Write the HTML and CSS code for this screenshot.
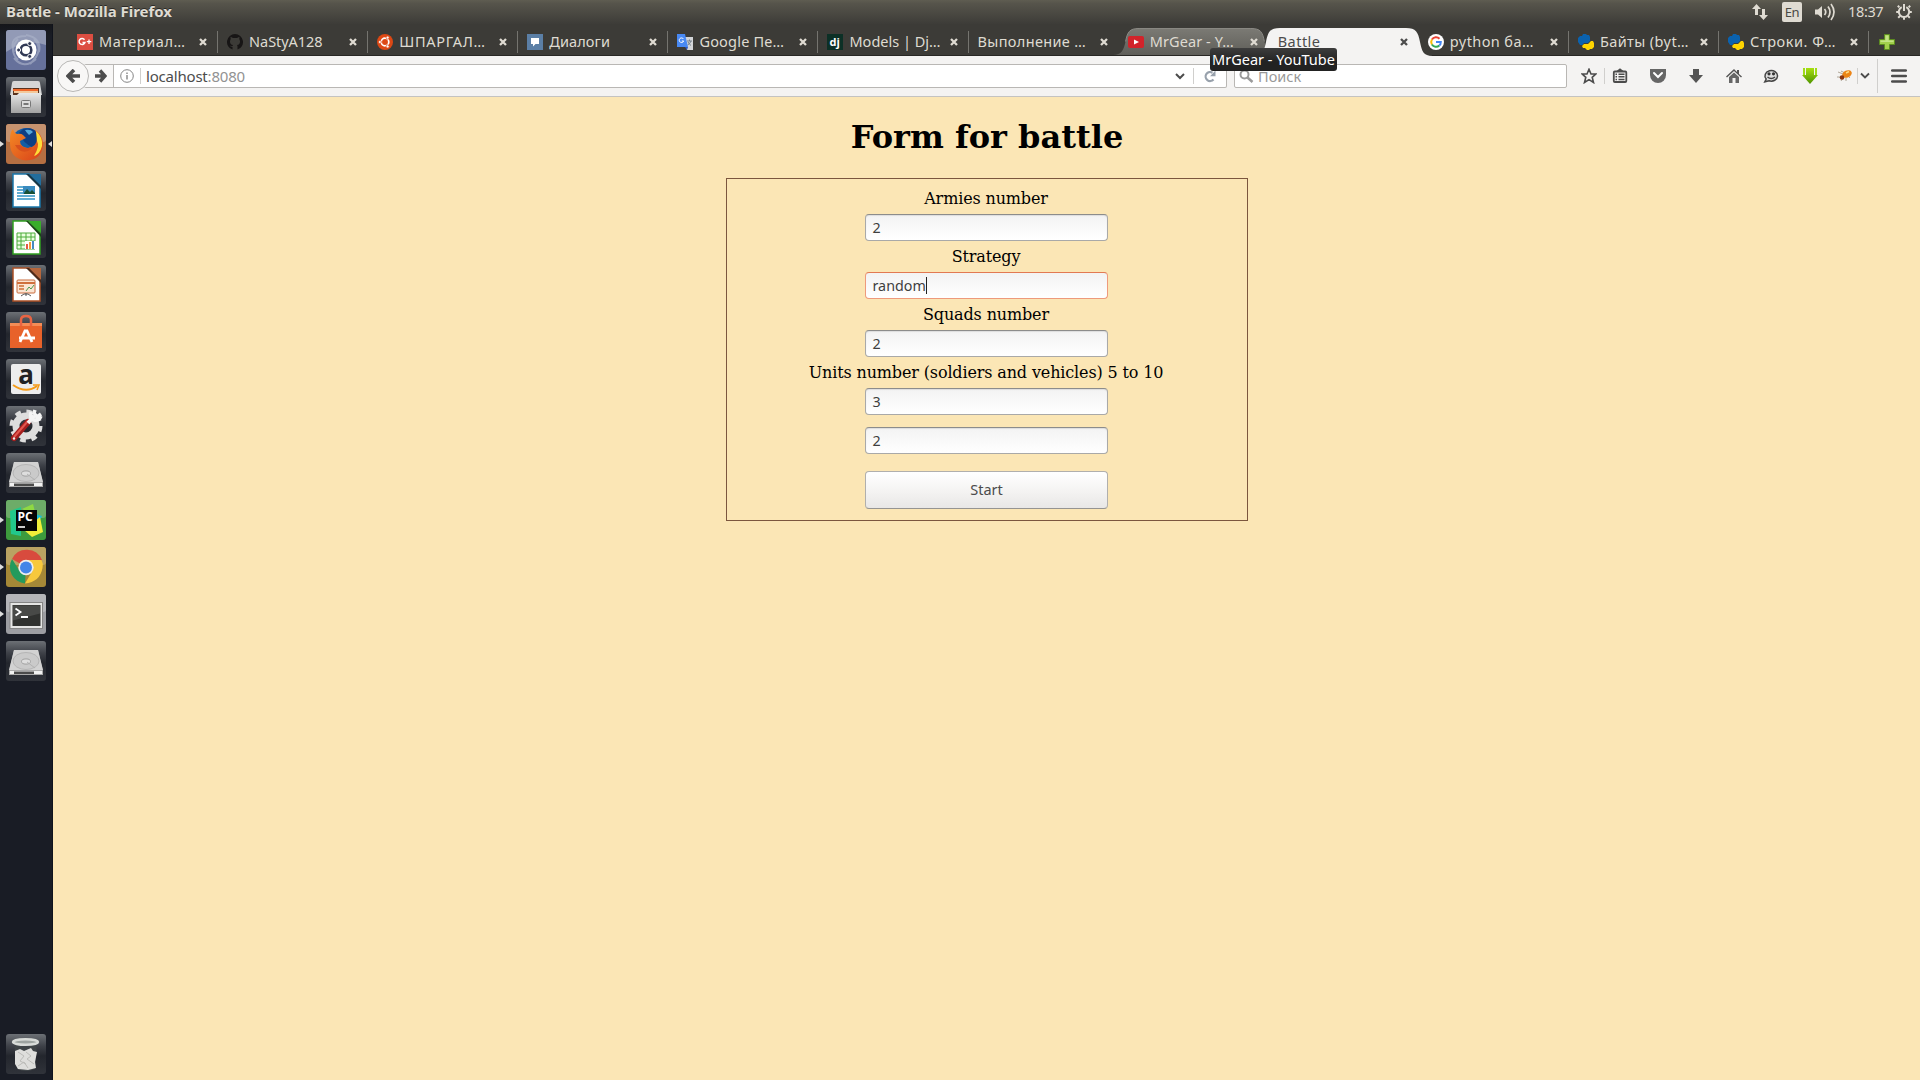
FILE: index.html
```html
<!DOCTYPE html>
<html lang="ru">
<head>
<meta charset="utf-8">
<title>Battle</title>
<link rel="stylesheet" href="styles.css">
</head>
<body>
<svg class="defs" width="0" height="0" aria-hidden="true">
  <defs>
    <linearGradient id="gTile" x1="0" y1="0" x2="0" y2="1"><stop offset="0" stop-color="#6c7075"/><stop offset=".3" stop-color="#3e4148"/><stop offset=".55" stop-color="#23262d"/><stop offset="1" stop-color="#30333a"/></linearGradient>
    <linearGradient id="gMetal" x1="0" y1="0" x2="0" y2="1"><stop offset="0" stop-color="#e8e8e8"/><stop offset="1" stop-color="#a2a2a2"/></linearGradient>
    <linearGradient id="gHover" x1="0" y1="0" x2="0" y2="1"><stop offset="0" stop-color="#7b7a74"/><stop offset="1" stop-color="#5f5e59"/></linearGradient>
    <linearGradient id="gFox" x1="0" y1="0" x2="1" y2="1"><stop offset="0" stop-color="#f48a24"/><stop offset="1" stop-color="#d8401a"/></linearGradient>
    <linearGradient id="gGreen" x1="0" y1="0" x2="0" y2="1"><stop offset="0" stop-color="#a8e010"/><stop offset="1" stop-color="#4f9400"/></linearGradient>
    <symbol id="close" viewBox="0 0 8 8"><path d="M1 1 7 7M7 1 1 7" fill="none" stroke="currentColor" stroke-width="2.300"/></symbol>
    <symbol id="python" viewBox="0 0 16 16"><path d="M2 2H4L5 0H8L9 1H11L12 3V7L10 9H6L4.500 11H2L0 8V4Z" fill="#0b62ae"/><path d="M12 15 11 16H9L7 14H5L4 12 6 10H10L13 7H15L16 9V13L14 15Z" fill="#ffd400"/></symbol>
    <symbol id="disk" viewBox="0 0 40 40"><path d="M8 9H32L37 30V34H3V30Z" fill="#a9a9a9"/><path d="M8 9H32L37 29H3Z" fill="#d2d2d2"/><path d="M4 30H36V33H4Z" fill="#f1f1f1"/><path d="M8 30.500H28V33H8Z" fill="#4b4b4b"/><ellipse cx="20" cy="20" rx="13" ry="8.500" fill="#cacaca" stroke="#b5b5b5"/><ellipse cx="20" cy="20.500" rx="4.500" ry="2.600" fill="#dedede" stroke="#a2a2a2"/><path d="M21 21 29 27" stroke="#b2b2b2"/></symbol>
  </defs>
</svg>

<header class="panel">
  <span class="panel-title">Battle - Mozilla Firefox</span>
  <div class="indicators">
    <svg class="ind-net" width="18" height="18" viewBox="0 0 18 18" fill="#dfdbd2"><path d="M5.500 1 10 6H7v6H4V6H1zM12.500 17 8 12h3V6h3v6h3z"/></svg>
    <span class="ind-lang">En</span>
    <svg class="ind-sound" width="21" height="18" viewBox="0 0 21 18"><path d="M1 6.500h3L8 3v12l-4-3.500H1z" fill="#dfdbd2"/><path d="M10.500 6q2.500 3 0 6M14 3.500q4 5.500 0 11M17 1q6 8 0 16" fill="none" stroke="#dfdbd2" stroke-width="1.700"/></svg>
    <span class="ind-clock">18:37</span>
    <svg class="ind-gear" width="18" height="18" viewBox="0 0 18 18" fill="none" stroke="#dfdbd2"><path d="M6.700 4.200a5.200 5.200 0 1 0 4.600 0" stroke-width="2"/><path d="M9 1v7" stroke-width="2"/><path d="M4.300 4.300 2.800 2.800M13.700 4.300l1.500-1.500M3.500 9H1.200M14.500 9H16.800M4.900 13.100 3.200 14.800M13.100 13.100l1.700 1.700M9 14.500V16.800" stroke-width="2"/></svg>
  </div>
</header>

<div class="desktop">
  <nav class="launcher">
    <div class="app"><svg viewBox="0 0 40 40"><rect width="40" height="40" rx="3" fill="#66719b"/><path d="M0 3Q0 0 3 0H37Q40 0 40 3V15Q20 8 0 22Z" fill="#929ab6"/><g fill="none" stroke="#abb2c9" stroke-width="2" opacity=".65"><path d="M8 22Q2 6 20 6M28 9Q39 20 24 34M12 30Q2 20 12 9M20 5Q36 8 33 22M30 29Q18 40 8 28"/></g><circle cx="20" cy="20" r="10.500" fill="#fff"/><circle cx="20" cy="20" r="5.300" fill="none" stroke="#303854" stroke-width="2.600"/><g fill="#303854" stroke="#fff"><circle cx="12.600" cy="20" r="2"/><circle cx="23.700" cy="13.600" r="2"/><circle cx="23.700" cy="26.400" r="2"/></g></svg></div>
    <div class="app"><svg viewBox="0 0 40 40"><rect width="40" height="40" rx="3" fill="url(#gTile)"/><path d="M6 6Q6 4 8 4H32Q34 4 34 6L36 18H4Z" fill="#d6d6d6"/><path d="M7 11H33V18H7Z" fill="#59331f"/><path d="M7 12H32V14H7Z" fill="#ef6a2d"/><path d="M8 14H32V16H8Z" fill="#f3c99b"/><path d="M5 18H11L13 16H35V36H5Z" fill="url(#gMetal)"/><rect x="15.500" y="23.500" width="9" height="7" rx="1" fill="#ddd" stroke="#777"/><path d="M17.500 27H22.500" stroke="#777" stroke-width="2"/></svg></div>
    <div class="app running focused"><svg viewBox="0 0 40 40"><rect width="40" height="40" rx="3" fill="#b56f42"/><rect width="40" height="18" rx="3" fill="#c5926f"/><circle cx="20.500" cy="19.500" r="15.500" fill="#135da4"/><path d="M17 5Q27 2 32 10Q34 20 26 23Q17 19 13 9Z" fill="#0e3f83"/><path d="M19 6Q25 5 27 8L23 11Q20 8 19 6Z" fill="#53a9dc"/><path d="M4 15Q4 8 7 5Q8 9 11 10Q15 9 17 11L20 14L14 17Q14 23 22 24Q31 23 31 14Q31 9 29 6Q36 10 37 19Q37 36 20 36.500Q4 35 4 19Z" fill="url(#gFox)"/><path d="M30 7Q37 13 36 22Q34 30 28 32Q34 22 31 17Z" fill="#ffdc38"/><path d="M9 21Q14 30 22 27Q27 25 25 23Q20 26 14 21Z" fill="#d8501c"/></svg></div>
    <div class="app"><svg viewBox="0 0 40 40"><rect width="40" height="40" rx="3" fill="url(#gTile)"/><path d="M7 3H23L34 15V36H7Z" fill="#fff" stroke="#1a77aa" stroke-width="1.500"/><path d="M23 3H35V15Z" fill="#226d9d"/><path d="M23 3 35 15V18L20 3Z" fill="#173747"/><path d="M11 16H17M11 19H17M11 22H17M11 25H29M11 28H29" stroke="#2e91c4" stroke-width="1.500"/><path d="M17 15H29V23H17Z" fill="#398bc0"/><path d="M18 22 21 18 24 21 26 19 29 22V23H18Z" fill="#175036"/></svg></div>
    <div class="app"><svg viewBox="0 0 40 40"><rect width="40" height="40" rx="3" fill="url(#gTile)"/><path d="M7 3H23L34 15V36H7Z" fill="#fff" stroke="#30a021" stroke-width="1.500"/><path d="M22 3H35V15Z" fill="#39ad2b"/><path d="M22 3 35 16V19L20 3Z" fill="#1b4417"/><path d="M11 15H29V31H11Z" fill="#eaffdf"/><path d="M11 15H29V31H11ZM15 15V31M20 15V31M25 15V31M11 19H29M11 23H29M11 27H29" fill="none" stroke="#4bac3b"/><path d="M19 23H30V31H19Z" fill="#fff"/><path d="M20 26H22V31H20Z" fill="#e25b44"/><path d="M23 24H25V31H23Z" fill="#f49b38"/><path d="M26 23H28V31H26Z" fill="#468bc0"/></svg></div>
    <div class="app"><svg viewBox="0 0 40 40"><rect width="40" height="40" rx="3" fill="url(#gTile)"/><path d="M7 3H23L34 15V36H7Z" fill="#fff" stroke="#ac5026" stroke-width="1.500"/><path d="M23 3H35V15Z" fill="#b5663c"/><path d="M23 3 35 15V18L20 3Z" fill="#4d2b1a"/><rect x="11" y="15" width="18" height="13" rx="1" fill="#fbe5d3" stroke="#c86b3c"/><path d="M11 18H29" stroke="#d0703d" stroke-width="2"/><path d="M13 21H18M13 24H18" stroke="#d88c5c" stroke-width="2"/><path d="M20 26 23 22 25 24 28 20" stroke="#499c4f" fill="none"/><path d="M15 31 18 29H22L25 31M20 28V31" stroke="#555" fill="none"/></svg></div>
    <div class="app"><svg viewBox="0 0 40 40"><rect width="40" height="40" rx="3" fill="url(#gTile)"/><path d="M4 11H36V36H4Z" fill="#e8622a"/><path d="M4 11H36V14H4Z" fill="#f38c56"/><path d="M15 14V8Q15 4 20 4T25 8V14" fill="none" stroke="#e86443" stroke-width="2.500"/><path d="M14 30 19 19H21L26 30M13 26H29" fill="none" stroke="#fff" stroke-width="2.800"/></svg></div>
    <div class="app"><svg viewBox="0 0 40 40"><rect width="40" height="40" rx="3" fill="url(#gTile)"/><rect x="5" y="5" width="30" height="30" rx="2" fill="#ededed"/><text x="20" y="25" text-anchor="middle" class="amazon">a</text><path d="M7 26Q20 35 31 27" fill="none" stroke="#f49b18" stroke-width="2"/><path d="M27 26H33L31 31" fill="none" stroke="#f49b18" stroke-width="1.500"/></svg></div>
    <div class="app"><svg viewBox="0 0 40 40"><rect width="40" height="40" rx="3" fill="url(#gTile)"/><circle cx="20" cy="20" r="10" fill="none" stroke="#dedede" stroke-width="7"/><circle cx="20" cy="20" r="14.500" fill="none" stroke="#dedede" stroke-width="4" stroke-dasharray="5.700 5.690"/><path d="M8 32 22 16" stroke="#a51e1e" stroke-width="6" stroke-linecap="round"/><path d="M8 31 22 15" stroke="#e2564d" stroke-width="2"/><path d="M22 17 28 10M25 6Q23 13 28 14Q33 15 35 10M29 4 28 7 31 11 35 8" fill="none" stroke="#f5f5f5" stroke-width="3.500"/><circle cx="8" cy="32.500" r="1.200" fill="#eee"/></svg></div>
    <div class="app"><svg viewBox="0 0 40 40"><rect width="40" height="40" rx="3" fill="url(#gTile)"/><use href="#disk"/></svg></div>
    <div class="app running"><svg viewBox="0 0 40 40"><rect width="40" height="40" rx="3" fill="#3d9b3d"/><rect width="40" height="18" rx="3" fill="#6dac68"/><path d="M4 11 15 7V36L5 34Z" fill="#22c88b"/><path d="M16 9 27 4 30 16Z" fill="#8fd943"/><path d="M25 13 36 16 31 26Z" fill="#18bdd7"/><path d="M18 30 34 17 37 32 26 37Z" fill="#f1ee39"/><rect x="10" y="10" width="21" height="21" fill="#050505"/><text x="11.500" y="21.300" class="pc">PC</text><path d="M12 27H19" stroke="#fff" stroke-width="1.600"/></svg></div>
    <div class="app running"><svg viewBox="0 0 40 40"><rect width="40" height="40" rx="3" fill="#a58837"/><rect width="40" height="18" rx="3" fill="#b9a262"/><path d="M20 20 6 12A16.500 16.500 0 0 1 36 13Z" fill="#d84b3e"/><path d="M20 20 19 36.500A16.500 16.500 0 0 1 6 12L13 23Z" fill="#249a5c"/><path d="M20 13H35.500Q37.500 16.500 36.500 21Q34 35 19 36.500L27 23Z" fill="#f7c83c"/><circle cx="20" cy="20.500" r="7.700" fill="#eee"/><circle cx="20" cy="20.500" r="6" fill="#4285e8"/></svg></div>
    <div class="app running"><svg viewBox="0 0 40 40"><rect width="40" height="40" rx="3" fill="#9c9da2"/><rect width="40" height="18" rx="3" fill="#b4b5b9"/><rect x="4" y="8.500" width="32.500" height="26" fill="#e5e5e4" stroke="#858585"/><rect x="6.500" y="11" width="28" height="21" fill="#30312f"/><path d="M7 11.500H34V19.500L7 26.500Z" fill="#484947"/><path d="M9.500 14.500 14.500 18 9.500 21.500M15 23H22" fill="none" stroke="#fff" stroke-width="1.800"/></svg></div>
    <div class="app"><svg viewBox="0 0 40 40"><rect width="40" height="40" rx="3" fill="url(#gTile)"/><use href="#disk"/></svg></div>
    <div class="app trash"><svg viewBox="0 0 40 40"><rect width="40" height="40" rx="3" fill="url(#gTile)"/><path d="M8 9H31L29 35Q20 39 11 35Z" fill="#3f4447"/><path d="M9 17 14 15 18 17 25 14 27 17 31 18 29 28 30 34 22 36 12 35 9 30Z" fill="#dededc"/><path d="M12 18 18 22 14 27 20 30M20 18 25 22 21 25 28 30M12 32 18 28 22 34" fill="none" stroke="#bcbcb9"/><ellipse cx="19.500" cy="8" rx="12.500" ry="2.800" fill="#9da3a0" stroke="#d8dbd8" stroke-width="2.400"/></svg></div>
  </nav>

  <div class="browser">
    <div class="tabs">
      <div class="tab"><svg class="fav" viewBox="0 0 16 16"><path d="M0 0H16V16H0Z" fill="#dc4e41"/><path d="M7.500 5.700A3 3 0 1 0 8 8.400H5.500" fill="none" stroke="#fff" stroke-width="1.500"/><path d="M12 5.500V10M9.800 7.700H14.300" stroke="#fff" stroke-width="1.300"/></svg><span class="label t1">Материал…</span><svg class="close"><use href="#close"/></svg></div>
      <div class="tab"><svg class="fav" viewBox="0 0 16 16"><path d="M8 0A8 8 0 0 0 5.500 15.600V13Q3.500 13.400 2.700 11.300 4.500 12.500 5.500 12L6 11Q2.800 10.300 3 7L3.700 5 3.500 2.800 6 4H10L12.500 2.800 12.300 5 13 7Q13.200 10.300 10 11L10.500 12V15.600A8 8 0 0 0 8 0Z" fill="#171515"/></svg><span class="label t2">NaStyA128</span><svg class="close"><use href="#close"/></svg></div>
      <div class="tab"><svg class="fav" viewBox="0 0 16 16"><circle cx="8" cy="8" r="8" fill="#dd4814"/><circle cx="8" cy="8" r="3.800" fill="none" stroke="#fff" stroke-width="1.700"/><g fill="#fff" stroke="#dd4814" stroke-width=".7"><circle cx="2.900" cy="8" r="1.500"/><circle cx="10.600" cy="3.600" r="1.500"/><circle cx="10.600" cy="12.400" r="1.500"/></g></svg><span class="label t3">ШПАРГАЛ…</span><svg class="close"><use href="#close"/></svg></div>
      <div class="tab"><svg class="fav" viewBox="0 0 16 16"><path d="M0 0H16V16H0Z" fill="#5b7fa6"/><path d="M4 4H12V10H8.500L6 12.500V10H4Z" fill="#fff"/></svg><span class="label t4">Диалоги</span><svg class="close"><use href="#close"/></svg></div>
      <div class="tab"><svg class="fav" viewBox="0 0 16 16"><path d="M7 3H16V16H10Z" fill="#d3d5d8"/><path d="M10 7H15M12.500 5.500V7M14 7Q13 10 10.500 11M11 8Q12 10 14 11.500" fill="none" stroke="#74808c"/><path d="M0 0H8L11 13H0Z" fill="#4889f4"/><path d="M8 13H11L10 16Z" fill="#2b57c5"/><path d="M6.500 5A2.300 2.300 0 1 0 6.700 7H4.800" fill="none" stroke="#fff"/></svg><span class="label t5">Google Пе…</span><svg class="close"><use href="#close"/></svg></div>
      <div class="tab"><svg class="fav" viewBox="0 0 16 16"><path d="M0 0H16V16H0Z" fill="#0c3026"/><text x="2.500" y="11.500" class="dj">dj</text></svg><span class="label t6">Models | Dj…</span><svg class="close"><use href="#close"/></svg></div>
      <div class="tab"><span class="label t7">Выполнение …</span><svg class="close"><use href="#close"/></svg></div>
      <div class="tab hover"><svg class="shape" viewBox="0 0 170 28"><path d="M0 28C9 28 11 23 13 14C15 4 17 .5 27 .5H143C153 .5 155 4 157 14C159 23 161 28 170 28Z" fill="url(#gHover)"/><path d="M13 14C15 4 17 .5 27 .5H143C153 .5 155 4 157 14" fill="none" stroke="#8c8b86"/></svg><svg class="fav" viewBox="0 0 16 16"><rect y="2" width="16" height="12" rx="2" fill="#d2232a"/><path d="M6 5.500 11 8 6 10.500Z" fill="#fff"/></svg><span class="label t8">MrGear - Y…</span><svg class="close"><use href="#close"/></svg></div>
      <div class="tab active"><svg class="shape" viewBox="0 0 180 28"><path d="M0 28C10 28 11 23 13 14C15 4 17 0 27 0H153C163 0 165 4 167 14C169 23 170 28 180 28Z" fill="#f4f3f2"/></svg><span class="label t9">Battle</span><svg class="close"><use href="#close"/></svg></div>
      <div class="tab"><svg class="fav" viewBox="0 0 16 16"><circle cx="8" cy="8" r="8" fill="#fff"/><g fill="none" stroke-width="2"><path d="M11.500 4.700A4.800 4.800 0 0 0 3.900 5.600" stroke="#ea4335"/><path d="M3.900 5.600A4.800 4.800 0 0 0 3.900 10.500" stroke="#fbbc05"/><path d="M3.900 10.500A4.800 4.800 0 0 0 11.300 11.500" stroke="#34a853"/><path d="M8 8H12.800Q12.800 10.500 11.300 11.500" stroke="#4285f4"/></g></svg><span class="label t10">python ба…</span><svg class="close"><use href="#close"/></svg></div>
      <div class="tab"><svg class="fav"><use href="#python"/></svg><span class="label t11">Байты (byt…</span><svg class="close"><use href="#close"/></svg></div>
      <div class="tab"><svg class="fav"><use href="#python"/></svg><span class="label t12">Строки. Ф…</span><svg class="close"><use href="#close"/></svg></div>
      <svg class="newtab" width="16" height="16" viewBox="0 0 16 16"><path d="M5.500 .5H10.500V5.500H15.500V10.500H10.500V15.500H5.500V10.500H.5V5.500H5.500Z" fill="#a2cf4c" stroke="#5c8c20"/><path d="M6.500 1.500H9.500V6.500H14.500V8H1.500V6.500H6.500Z" fill="#c4e386"/></svg>
    </div>

    <div class="toolbar">
      <div class="back"><svg width="14" height="14" viewBox="0 0 14 14"><path d="M8 1 2 7 8 13M2.500 7H14" fill="none" stroke="#4c4c4c" stroke-width="3.600"/></svg></div>
      <div class="urlbar">
        <div class="forward"><svg width="12" height="14" viewBox="0 0 12 14"><path d="M5 1.500 10 7 5 12.500M10 7H0" fill="none" stroke="#4c4c4c" stroke-width="3.400"/></svg></div>
        <svg class="info" width="14" height="14" viewBox="0 0 14 14"><circle cx="7" cy="7" r="6.300" fill="none" stroke="#858585"/><path d="M7 6V10.500M7 3.500V5" stroke="#858585" stroke-width="1.400"/></svg>
        <i class="line"></i>
        <span class="host">localhost</span><span class="port">:8080</span>
        <svg class="drop" width="10" height="8" viewBox="0 0 10 8"><path d="M1 2 5 6 9 2" fill="none" stroke="#4c4c4c" stroke-width="2"/></svg>
        <i class="line"></i>
        <svg class="reload" width="12" height="13" viewBox="0 0 12 13"><path d="M8.500 2.700A4.500 4.500 0 1 0 9.500 9.500" fill="none" stroke="#98a1ac" stroke-width="2.200"/><path d="M6 6.200H11.500V.6Z" fill="#98a1ac"/></svg>
      </div>
      <div class="search"><svg width="15" height="14" viewBox="0 0 15 14"><circle cx="5.500" cy="5.500" r="4" fill="none" stroke="#9a9a9a" stroke-width="2"/><path d="M8.500 8.500 13.500 13" stroke="#9a9a9a" stroke-width="2.500"/></svg><span>Поиск</span></div>
      <div class="tools">
        <svg viewBox="0 0 16 16" class="ic"><path d="M8 1.300 10 6H14.800L11.200 9.300 12.500 14.500 8 11.600 3.500 14.500 4.800 9.300 1.200 6H6Z" fill="none" stroke="#4c4c4c" stroke-width="1.600"/></svg>
        <i class="line star-line"></i>
        <svg viewBox="0 0 16 16" class="ic list"><rect x="1.800" y="3.500" width="12.500" height="10.500" rx="1" fill="none" stroke="#4c4c4c" stroke-width="1.800"/><path d="M4.500 3 8 .3 11.500 3Z" fill="#4c4c4c"/><path d="M3.500 6.200H5M6.500 6.200H12.500M3.500 8.800H5M6.500 8.800H12.500M3.500 11.400H5M6.500 11.400H12.500" stroke="#4c4c4c" stroke-width="1.500"/></svg>
        <svg viewBox="0 0 16 16" class="ic gap22"><path d="M0 1H16V7A8 8 0 0 1 0 7Z" fill="#666"/><path d="M4 5 8 9 12 5" fill="none" stroke="#fff" stroke-width="2" stroke-linecap="round"/></svg>
        <svg viewBox="0 0 16 16" class="ic gap22"><path d="M5 1H11V7H15L8 15 1 7H5Z" fill="#555"/></svg>
        <svg viewBox="0 0 16 16" class="ic gap22"><path d="M0 8.500 8 1 11 4V2H13V6L16 8.500 15 9.500 8 3 1 9.500Z" fill="#555"/><path d="M3 9 8 4.500 13 9V15H9.500V10H6.500V15H3Z" fill="#666"/></svg>
        <svg viewBox="0 0 16 16" class="ic gap21"><path d="M3.200 11 1.800 13.800 6 12.800A6.300 5.300 0 1 0 3.200 11Z" fill="#ddd" stroke="#444" stroke-width="1.500"/><circle cx="6" cy="5.800" r="1.600" fill="#333"/><circle cx="10.500" cy="5.800" r="1.600" fill="#333"/><path d="M4.500 9Q8.200 12 12 9" fill="none" stroke="#444" stroke-width="1.500"/></svg>
        <svg viewBox="0 0 16 16" class="ic gap23"><path d="M4 0H12V7H16L8 16 0 7H4Z" fill="url(#gGreen)"/><path d="M2 0V7M14 0V7" stroke="#9fdc18" stroke-width="2"/></svg>
        <svg viewBox="0 0 16 16" class="ic gap19"><path d="M1 4 6 6M4 3 8 5M0 9 5 9M4 13 6 10M9 13 9 10M13 10 11 8" stroke="#a09484" stroke-width=".8"/><ellipse cx="10" cy="6" rx="5" ry="3.500" transform="rotate(-25 10 6)" fill="#ec8516"/><path d="M9 5 12 3.500" stroke="#ffdc83" stroke-width="1.500"/><circle cx="5" cy="9.500" r="2.300" fill="#8b3610"/></svg>
        <i class="line bug-line"></i>
        <svg class="more" width="10" height="8" viewBox="0 0 10 8"><path d="M1 1.500 5 5.500 9 1.500" fill="none" stroke="#4c4c4c" stroke-width="1.800"/></svg>
        <i class="line menu-line"></i>
        <svg viewBox="0 0 16 16" class="ic menu"><path d="M1.200 2.500H14.800M1.200 8H14.800M1.200 13.500H14.800" stroke="#4c4c4c" stroke-width="2.600" stroke-linecap="round"/></svg>
      </div>
      <div class="tooltip"><span>MrGear - YouTube</span></div>
    </div>

    <main class="page">
      <h1>Form for battle</h1>
      <form class="battle">
        <label>Armies number</label>
        <div class="field">2</div>
        <label>Strategy</label>
        <div class="field focus"><span class="typed">random</span><i class="caret"></i></div>
        <label>Squads number</label>
        <div class="field">2</div>
        <label class="units">Units number (soldiers and vehicles) 5 to 10</label>
        <div class="field">3</div>
        <div class="field extra">2</div>
        <button type="button">Start</button>
      </form>
    </main>
  </div>
</div>
</body>
</html>
```
FILE: styles.css
```css
* { box-sizing: border-box; }
body { margin: 0; width: 1920px; height: 1080px; overflow: hidden; display: flex; flex-direction: column; font-family: "Noto Sans", "Open Sans", sans-serif; }
svg { display: block; flex: none; }
.defs { position: absolute; }

.panel { height: 24px; flex: none; display: flex; align-items: center; justify-content: space-between; padding: 0 7px 0 6px; background: linear-gradient(#5f5d51, #56544b 15%, #3d3c38); color: #dfdbd2; }
.panel-title { height: 24px; font-size: 15px; font-weight: 700; letter-spacing: -.03px; line-height: 22px; white-space: nowrap; text-shadow: 0 -1px #2b2a27; }
.indicators { display: flex; align-items: center; height: 24px; }
.ind-lang { width: 20px; height: 20px; margin: 0 12px 0 12px; border-radius: 2px; background: #dfdbd2; color: #4a4944; font-size: 13px; line-height: 20px; text-align: center; letter-spacing: -.5px; }
.ind-net { position: relative; left: -1px; }
.ind-clock { width: 36px; margin: 0 11px 0 13px; font-size: 14.5px; letter-spacing: -.35px; line-height: 22px; height: 24px; white-space: nowrap; }

.desktop { flex: 1; display: flex; min-height: 0; }
.launcher { width: 53px; flex: none; display: flex; flex-direction: column; gap: 7px; padding: 6px 7px 6px 6px; background: linear-gradient(#15161a, #191c25 12px); border-right: 1px solid #10131c; }
.app { width: 40px; height: 40px; flex: none; position: relative; }
.app svg { width: 40px; height: 40px; overflow: visible; }
.app.running::before { content: ""; position: absolute; left: -6px; top: 17px; border: 3px solid transparent; border-left: 4px solid #ddd; border-right: 0; }
.app.focused::after { content: ""; position: absolute; right: -6px; top: 17px; border: 3px solid transparent; border-right: 4px solid #ddd; border-left: 0; }
.trash { margin-top: auto; }
.amazon { font: 700 26px "Noto Sans", sans-serif; fill: #222; }
.pc { font: 700 12px "Open Sans", sans-serif; fill: #fff; }
.dj { font: 700 11px "Open Sans", sans-serif; fill: #fff; }

.browser { flex: 1; min-width: 0; display: flex; flex-direction: column; }
.tabs { height: 32px; flex: none; display: flex; padding-left: 14px; background: #3c3b37; border-bottom: 1px solid #282724; }
.tab { width: 150.1px; flex: none; height: 31px; position: relative; display: flex; align-items: center; padding: 5px 10px 0; color: #dfdbd2; }
.tab::after { content: ""; position: absolute; right: -1px; top: 7px; width: 1px; height: 22px; background: #75746f; }
.tab:nth-child(n+7):nth-child(-n+9)::after { display: none; }
.fav { width: 16px; height: 16px; margin-right: 6px; position: relative; }
.label { flex: 1; font-size: 14.5px; line-height: 20px; padding-bottom: 2px; white-space: nowrap; position: relative; }
.t1 { letter-spacing: .55px; }
.t2 { letter-spacing: -.05px; }
.t3 { letter-spacing: .7px; }
.t4 { letter-spacing: .1px; }
.t5 { letter-spacing: .2px; }
.t7 { letter-spacing: .35px; }
.t8 { letter-spacing: .1px; }
.t9 { letter-spacing: .45px; }
.t10 { letter-spacing: .4px; }
.t11 { letter-spacing: .4px; }
.t12 { letter-spacing: .55px; }
.close { width: 8px; height: 8px; position: relative; }
.shape { position: absolute; left: -15px; top: 4px; width: 180px; height: 28px; }
.hover .shape { left: -8px; width: 170px; height: 27px; }
.hover { z-index: 1; }
.active { color: #4c4c4c; z-index: 2; }
.newtab { margin: 10px 0 0 11px; }

.toolbar { height: 41px; flex: none; display: flex; align-items: flex-start; background: #f4f3f2; border-bottom: 1px solid #c4c3c1; padding-top: 8px; position: relative; }
.back { width: 32px; height: 32px; margin: -4px 0 0 4px; border: 1px solid #b8b7b5; border-radius: 50%; background: #f8f7f6; display: flex; align-items: center; justify-content: center; z-index: 1; }
.urlbar { width: 1143px; height: 24px; margin-left: -5px; border: 1px solid #b9b7b4; border-left: 0; border-radius: 2px; background: #fff; display: flex; align-items: center; font-size: 15px; color: #4c4c4c; }
.forward { width: 30px; height: 22px; background: #f8f7f6; border-right: 1px solid #b9b7b4; display: flex; align-items: center; padding-left: 11px; }
.info { margin: 0 6px; }
.line { width: 1px; height: 16px; background: #d0cfcd; flex: none; }
.host { margin-left: 5px; letter-spacing: -.2px; }
.port { color: #929292; letter-spacing: -.2px; }
.drop { margin-left: auto; margin-right: 8px; }
.reload { margin: 0 10px 0 10px; }
.search { width: 333px; height: 24px; margin-left: 7px; border: 1px solid #b9b7b4; border-radius: 2px; background: #fff; display: flex; align-items: center; gap: 4px; padding-left: 4px; font-size: 14.5px; color: #999; }
.tools { height: 24px; display: flex; align-items: center; margin-left: 14px; }
.ic { width: 16px; height: 16px; }
.star-line { margin-left: 7px; }
.list { margin-left: 7px; }
.gap19 { margin-left: 19px; }
.gap21 { margin-left: 21px; }
.gap22 { margin-left: 22px; }
.gap23 { margin-left: 23px; }
.bug-line { margin-left: 4px; }
.more { margin-left: 2px; }
.menu-line { margin-left: 7px; height: 34px; }
.menu { margin-left: 13px; }
.tooltip { position: absolute; left: 1157px; top: -8px; width: 127px; height: 23px; border-radius: 3px; background: linear-gradient(#3d3d3d, #222 60%); color: #fff; font-size: 14.5px; letter-spacing: 0; line-height: 23px; text-align: center; white-space: nowrap; z-index: 5; }

.page { flex: 1; background: #fbe6b5; color: #000; font-family: "DejaVu Serif", serif; display: flex; flex-direction: column; align-items: center; padding-left: 1px; }
h1 { margin: 21px 0 22px; font-size: 32px; line-height: 38px; font-weight: 700; white-space: nowrap; }
.battle { width: 522px; height: 343px; border: 1px solid #7b563e; padding: 10px 11px 10px 9px; display: flex; flex-direction: column; align-items: center; font-size: 16px; }
label { height: 19px; line-height: 19px; margin-bottom: 6px; white-space: nowrap; letter-spacing: -.14px; }
.field { width: 243px; height: 27px; flex: none; margin-bottom: 6px; padding-left: 7px; border: 1px solid #a9a9a8; border-top-color: #8c8c8b; border-radius: 4px; background: linear-gradient(#f3f3f3, #fff); box-shadow: inset 0 1px 1px #ddd; color: #3f3f3f; font: 14.3px/25px "Noto Sans", sans-serif; display: flex; align-items: center; }
.focus { border-color: #ee9a7c; border-top-color: #e27952; box-shadow: none; }
.caret { width: 1px; height: 17px; background: #222; }
.extra { margin-top: 6px; }
button { width: 243px; height: 38px; flex: none; margin-top: 11px; border: 1px solid #b0afad; border-bottom-color: #959492; border-radius: 4px; background: linear-gradient(#fff, #f5f4f3 50%, #e8e7e6); color: #4c4c4c; font: 14.5px "Noto Sans", sans-serif; padding: 0 0 2px 1px; }
```
